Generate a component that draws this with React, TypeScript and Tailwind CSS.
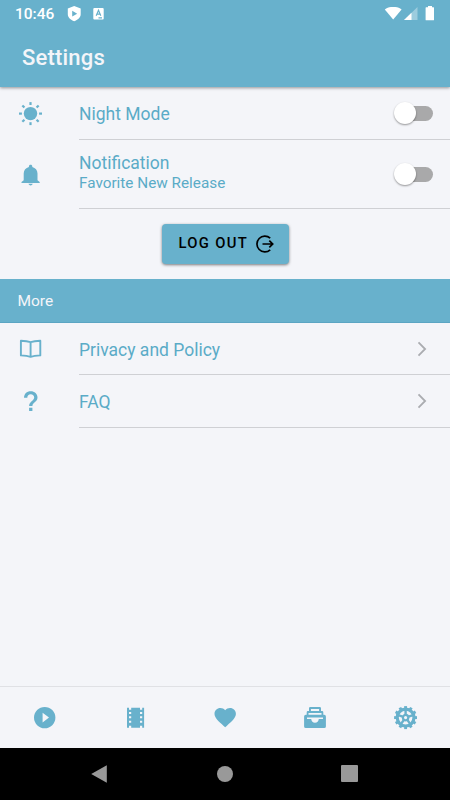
import type { ReactNode } from "react";

const iconClass = "h-6 w-6 text-[#68b1cc]";

const SunIcon = () => (
  <svg viewBox="0 0 24 24" className={iconClass} fill="currentColor">
    <circle cx="11.5" cy="11.6" r="6.7" />
    {[0, 45, 90, 135, 180, 225, 270, 315].map((angle) => (
      <rect
        key={angle}
        x="10.4"
        y="0.1"
        width="2.2"
        height="2.9"
        transform={`rotate(${angle} 11.5 11.6)`}
      />
    ))}
  </svg>
);

const BellIcon = () => (
  <svg viewBox="0 0 24 24" className={iconClass} fill="currentColor">
    <path d="M11.600 22.400c1.200 0 2.100-.8 2.100-1.600H9.500c0 .8.900 1.600 2.100 1.600zM18.500 17.200V10.600c0-3.400-2.100-5.700-5.200-6.500v-.7C13.300 2.400 12.600 1.700 11.600 1.700s-1.700.7-1.700 1.700v.7c-3.100.8-5.200 3.100-5.200 6.500v6.600l-2.200 1.700v1h18.200v-1z" />
  </svg>
);

const BookIcon = () => (
  <svg
    viewBox="0 0 24 24"
    className={iconClass}
    fill="none"
    stroke="currentColor"
    strokeWidth="1.900"
    strokeLinejoin="round"
  >
    <path d="M11.600 5.100C8.600 4.200 5.400 3.900 1.900 3.700v14.700c3.500.2 6.700.5 9.700 1.400 3-.9 6.200-1.200 9.700-1.400V3.700c-3.500.2-6.700.5-9.700 1.400zM11.600 5.100v14.700" />
  </svg>
);

const HelpIcon = () => (
  <svg viewBox="0 0 24 24" className={iconClass} fill="currentColor">
    <path d="M10.100 17.800h3.300v3.200h-3.300zM11.700 1.200c-3.900 0-6.700 2.700-6.700 6.500h3.300c0-2 1.400-3.500 3.400-3.500s3.500 1.300 3.500 3.200c0 3.300-5.100 3.800-5.100 8.600h3.300c0-3.800 5.100-4.100 5.100-8.600 0-3.600-2.900-6.200-6.800-6.200z" />
  </svg>
);

const LogOutIcon = () => (
  <svg
    viewBox="0 0 18 18"
    className="h-[18px] w-[18px]"
    fill="none"
    stroke="currentColor"
    strokeWidth="1.700"
  >
    <path d="M14.200 3.200A7.900 7.900 0 1 0 14.200 14.800M6.500 9h10M13.300 5.700l3.400 3.300-3.400 3.300" />
  </svg>
);

const PlayIcon = () => (
  <svg viewBox="0 0 24 24" className={iconClass} fill="currentColor">
    <path
      fillRule="evenodd"
      d="M11.700 .900a10.700 10.700 0 1 0 0 21.400 10.700 10.700 0 0 0 0-21.400zM9.600 6.800v9.600l6.400-4.800z"
    />
  </svg>
);

const FilmIcon = () => (
  <svg viewBox="0 0 24 24" className={iconClass} fill="currentColor">
    <path
      fillRule="evenodd"
      d="M4 1.700h2v2h2.200v-2H17v2h2.200v-2h1.900v20h-1.900v-2H17v2H8.200v-2H6v2H4zM6 6v2h2.200V6zM6 10.300v2h2.200v-2zM6 14.700v2h2.200v-2zM17 6v2h2.200V6zM17 10.300v2h2.200v-2zM17 14.700v2h2.200v-2z"
    />
  </svg>
);

const HeartIcon = () => (
  <svg viewBox="0 0 24 24" className={iconClass} fill="currentColor">
    <path d="m12.200 21.300-1.500-1.400C5.200 15 1.500 11.700 1.500 7.800 1.500 4.500 4.100 2 7.400 2c1.800 0 3.600.9 4.800 2.200C13.400 2.900 15.200 2 17 2c3.300 0 5.900 2.500 5.900 5.800 0 3.900-3.700 7.200-9.200 12.100z" />
  </svg>
);

const ArchiveIcon = () => (
  <svg viewBox="0 0 24 24" className={iconClass} fill="currentColor">
    <path
      fillRule="evenodd"
      d="M7.300 1h9.400q1.300 0 1.300 1.200v2.900h1.100q1.200 0 1.200 1.200v2.400h.9q1.700 0 1.700 1.700v10q0 1.700-1.700 1.700H2.800q-1.700 0-1.700-1.700v-10q0-1.700 1.700-1.700h.9V6.300q0-1.200 1.200-1.200H6V2.200Q6 1 7.300 1zM7.900 3v2.100h8.200V3zM5.500 7.100v1.600h13V7.100zM4 11.400v1.600h4.200c.2 2.300 1.700 3.800 3.800 3.800s3.600-1.500 3.800-3.800H20v-1.600z"
    />
  </svg>
);

const GearIcon = () => (
  <svg
    viewBox="0 0 24 24"
    className={iconClass}
    fill="none"
    stroke="currentColor"
  >
    <circle cx="12.600" cy="11.600" r="8.400" strokeWidth="3.200" />
    <circle cx="12.600" cy="11.600" r="2.700" strokeWidth="2.200" />
    {[0, 30, 60, 90, 120, 150, 180, 210, 240, 270, 300, 330].map((angle) => (
      <path
        key={angle}
        d="M12.600 .1v2.800"
        strokeWidth="2.900"
        transform={`rotate(${angle} 12.6 11.6)`}
      />
    ))}
    {[0, 72, 144, 216, 288].map((angle) => (
      <path
        key={angle}
        d="M12.600 9.200V3.800"
        strokeWidth="2.400"
        transform={`rotate(${angle} 12.6 11.6)`}
      />
    ))}
  </svg>
);

const Toggle = () => (
  <button
    role="switch"
    aria-checked={false}
    className="relative mr-[17px] h-[15px] w-9 shrink-0 rounded-full bg-[#a9a9aa]"
  >
    <span className="absolute -top-[4px] -left-[3px] size-[22px] rounded-full bg-white shadow-[0_1px_2px_rgba(0,0,0,0.4)]" />
  </button>
);

const Chevron = () => (
  <svg
    viewBox="0 0 12 18"
    className="mr-[22px] h-[18px] w-3 text-[#aaacb0]"
    fill="none"
    stroke="currentColor"
    strokeWidth="1.800"
  >
    <path d="m2.500 2.400 6.600 6.600-6.600 6.600" />
  </svg>
);

interface RowProps {
  icon: ReactNode;
  title: string;
  subtitle?: string;
  action: ReactNode;
  height: string;
}

const Row = ({ icon, title, subtitle, action, height }: RowProps) => (
  <div className={`flex items-center pl-[19px] ${height}`}>
    {icon}
    <div className="ml-9 flex h-full flex-1 items-center justify-between border-b border-[#cfd0d4]">
      <div className="text-[#5aabc7]">
        <h2 className="pt-0.5 text-[17.5px] leading-[22px]">{title}</h2>
        {subtitle && <p className="pb-1.5 text-[15.3px] leading-[19px]">{subtitle}</p>}
      </div>
      {action}
    </div>
  </div>
);

const StatusBar = () => (
  <div className="flex h-[27px] items-center pl-[15px] text-white">
    <span className="w-[52px] pt-0.5 text-[15.5px] font-medium">10:46</span>
    <svg viewBox="0 0 14 16" className="h-4 w-3.5" fill="currentColor">
      <path
        fillRule="evenodd"
        d="M7.200 0 13.700 2.500v5.700c0 3.300-2.900 5.500-6.500 7C3.600 13.700.8 11.500.8 8.200V2.500zM5.200 4.800v5.800l5-2.900z"
      />
    </svg>
    <svg viewBox="0 0 11 12" className="ml-3 h-3 w-[11px]">
      <rect x=".3" y="0" width="10.400" height="11.500" rx="1" fill="currentColor" />
      <path
        d="M3.200 7.800 5.500 2.300l2.300 5.500M4 6.100h3M5.500 9.900h3.500"
        fill="none"
        stroke="#68b1cc"
        strokeWidth="1.200"
      />
    </svg>
    <svg viewBox="0 0 18 14" className="ml-auto h-3.5 w-[18px]" fill="currentColor">
      <path d="M.8 2.400C5.500-1 12.900-1 17.600 2.400L9.200 12.400z" />
    </svg>
    <svg viewBox="0 0 14 14" className="ml-[2px] h-3.5 w-3.5" fill="currentColor">
      <path d="M13.500 0v13H0z" opacity=".35" />
      <path d="M7.500 5.800V13H0z" />
    </svg>
    <svg viewBox="0 0 10 15" className="mr-[15px] ml-[7px] h-[15px] w-2.5" fill="currentColor">
      <path d="M3 0h4v1.200h1.500q.5 0 .5.500v12q0 .6-.6.6H1.200q-.6 0-.6-.6v-12q0-.5.500-.5H3z" />
    </svg>
  </div>
);

const tabs = [
  { name: "Play", icon: <PlayIcon /> },
  { name: "Movies", icon: <FilmIcon /> },
  { name: "Favorites", icon: <HeartIcon /> },
  { name: "Library", icon: <ArchiveIcon /> },
  { name: "Settings", icon: <GearIcon /> },
];

export default function App() {
  return (
    <div className="flex h-[800px] w-[450px] flex-col overflow-hidden bg-[#f4f5f9] font-['Roboto',sans-serif]">
      {/* Header */}
      <header className="z-10 h-[87px] shrink-0 bg-[#68b1cc] shadow-[0_1px_3px_rgba(0,0,0,0.4)]">
        <StatusBar />
        <h1 className="flex h-[60px] items-center pl-[22px] text-[22px] font-medium tracking-[0.2px] text-[#f4f5f9]">
          Settings
        </h1>
      </header>

      {/* Settings list */}
      <main className="flex-1">
        <Row icon={<SunIcon />} title="Night Mode" action={<Toggle />} height="h-[53px]" />
        <Row
          icon={<BellIcon />}
          title="Notification"
          subtitle="Favorite New Release"
          action={<Toggle />}
          height="h-[69px]"
        />
        <div className="flex h-[70px] items-center justify-center">
          <button className="flex h-10 w-[127px] items-center rounded bg-[#68b1cc] pl-[17px] text-black shadow-[0_1px_3px_rgba(0,0,0,0.5)]">
            <span className="w-[77px] pb-0.5 text-left text-[14.8px] font-medium tracking-[1.3px]">
              LOG OUT
            </span>
            <LogOutIcon />
          </button>
        </div>

        <div className="flex h-11 items-center border-b border-[#5ba5c3] bg-[#68b1cc] pt-0.5 pl-[17.5px] text-[15.5px] text-[#f4f5f9]">
          More
        </div>
        <Row icon={<BookIcon />} title="Privacy and Policy" action={<Chevron />} height="h-[52px]" />
        <Row icon={<HelpIcon />} title="FAQ" action={<Chevron />} height="h-[53px]" />
      </main>

      {/* Tabs */}
      <nav className="flex h-[62px] shrink-0 items-center justify-around border-t border-[#e0e1e5]">
        {tabs.map((tab) => (
          <button key={tab.name} aria-label={tab.name}>
            {tab.icon}
          </button>
        ))}
      </nav>

      {/* Android navigation */}
      <div className="flex h-[52px] shrink-0 items-center bg-black pb-px pl-[90px] text-[#999]">
        <svg viewBox="0 0 18 20" className="h-5 w-[18px]" fill="currentColor">
          <path d="M1.200 10 16.800 1.200v17.600z" />
        </svg>
        <span className="ml-[109px] size-4 rounded-full bg-current" />
        <span className="ml-[108px] size-[17px] rounded-[1px] bg-current" />
      </div>
    </div>
  );
}
